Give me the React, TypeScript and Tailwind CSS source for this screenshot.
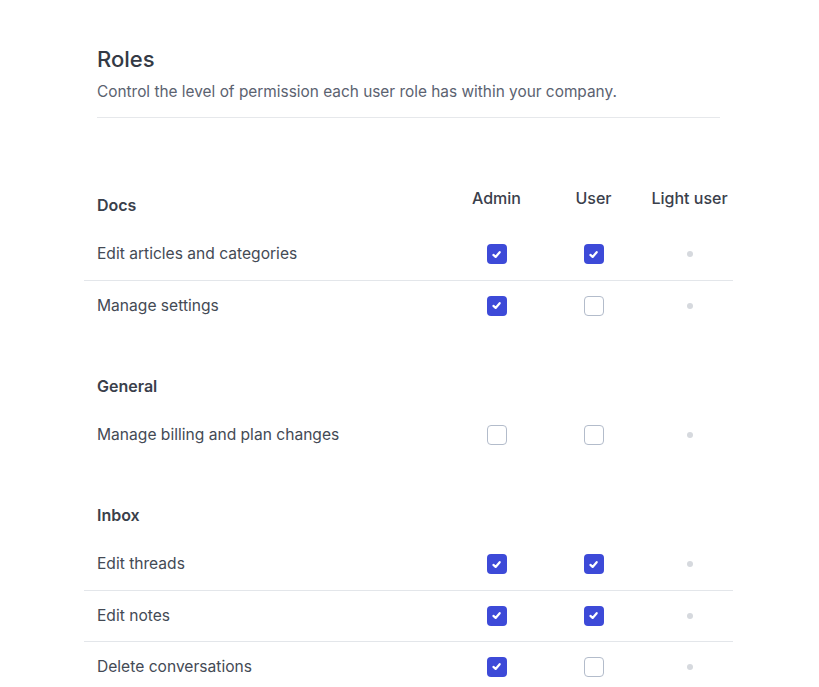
import React from "react";

type Row = { label: string; admin: boolean; user: boolean };
type Section = { title: string; rows: Row[] };

const sections: Section[] = [
  {
    title: "Docs",
    rows: [
      { label: "Edit articles and categories", admin: true, user: true },
      { label: "Manage settings", admin: true, user: false },
    ],
  },
  {
    title: "General",
    rows: [{ label: "Manage billing and plan changes", admin: false, user: false }],
  },
  {
    title: "Inbox",
    rows: [
      { label: "Edit threads", admin: true, user: true },
      { label: "Edit notes", admin: true, user: true },
      { label: "Delete conversations", admin: true, user: false },
    ],
  },
];

function Box({ checked }: { checked: boolean }) {
  if (checked) {
    return (
      <span className="flex h-[20px] w-[20px] items-center justify-center rounded-[4px] bg-[#3d4ad8]">
        <svg width="11" height="11" viewBox="0 0 10 10" fill="none">
          <path d="M2.2 5.4 L4.2 7.2 L7.9 2.9" stroke="white" strokeWidth="2" strokeLinecap="round" strokeLinejoin="round" />
        </svg>
      </span>
    );
  }
  return <span className="block h-[20px] w-[20px] rounded-[4px] border-[1.5px] border-[#b3bccb] bg-white" />;
}

function Dot() {
  return <span className="block h-[6px] w-[6px] rounded-full bg-[#d6d9de]" />;
}

export default function App() {
  return (
    <div className="min-h-[687px] w-[819px] bg-white text-[#3a404b]" style={{ fontFamily: "Inter, 'Noto Sans', sans-serif" }}>
      <div className="ml-[84px] w-[649px] pt-[44px]">
        <div className="px-[13px]">
          <h1 className="text-[22px] leading-[30px] font-medium text-[#343a45]">Roles</h1>
          <p className="mt-[7px] text-[15.4px] leading-[22px] text-[#5b6270]">
            Control the level of permission each user role has within your company.
          </p>
          <div className="mt-[14px] h-px bg-[#e6e8eb]" />
        </div>

        <div className="mt-[32px]">
          {sections.map((s, si) => (
            <div key={s.title} className="pt-[31.5px]">
              <div className="flex h-[47px] items-center">
                <div className="w-[364px] pl-[13px] text-[16px] font-semibold text-[#3a404b]">{s.title}</div>
                {si === 0 && (
                  <>
                    <div className="w-[97px] pb-[14px] text-center text-[16px] font-medium text-[#3a404b]">Admin</div>
                    <div className="w-[97px] pb-[14px] text-center text-[16px] font-medium text-[#3a404b]">User</div>
                    <div className="w-[91px] pb-[14px] pl-[4px] text-center text-[16px] font-medium whitespace-nowrap text-[#3a404b]">Light user</div>
                  </>
                )}
              </div>
              {s.rows.map((r, ri) => (
                <div
                  key={r.label}
                  className={`flex h-[51px] items-center ${ri > 0 ? "border-t border-[#e3e6ea]" : ""}`}
                >
                  <div className="w-[364px] pl-[13px] text-[15.6px] text-[#444a55]">{r.label}</div>
                  <div className="flex w-[97px] justify-center">
                    <Box checked={r.admin} />
                  </div>
                  <div className="flex w-[97px] justify-center">
                    <Box checked={r.user} />
                  </div>
                  <div className="flex w-[91px] justify-center pl-[4px]">
                    <Dot />
                  </div>
                </div>
              ))}
            </div>
          ))}
        </div>
      </div>
    </div>
  );
}
